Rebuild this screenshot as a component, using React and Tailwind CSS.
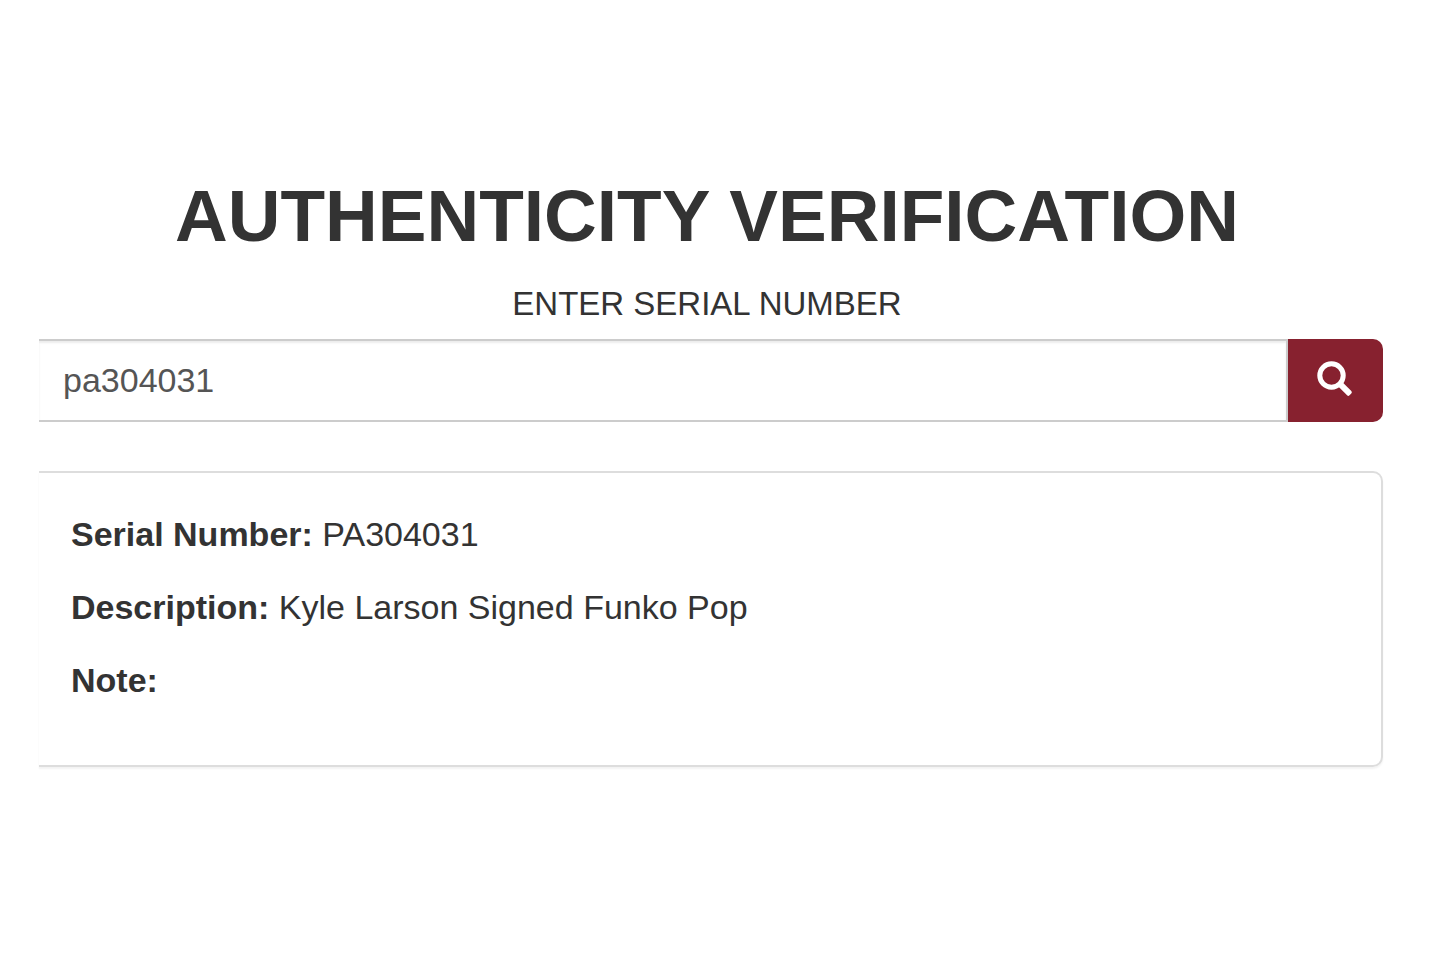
import React, { useState } from 'react';

const record = [
  { label: 'Serial Number', value: 'PA304031' },
  { label: 'Description', value: 'Kyle Larson Signed Funko Pop' },
  { label: 'Note', value: '' },
];

function SearchIcon() {
  return (
    <svg viewBox="0 0 36 36" className="mr-0.5 mb-1 size-9" fill="none" aria-hidden="true">
      <circle cx="14.5" cy="14.5" r="11.7" stroke="white" strokeWidth="5" />
      <path
        d="M24 19.800 L34.300 30.100 Q35.500 31.300 34.300 32.500 L32.500 34.300 Q31.300 35.500 30.100 34.300 L19.800 24 Z"
        fill="white"
      />
    </svg>
  );
}

export default function App() {
  const [serial, setSerial] = useState('pa304031');

  return (
    <main className="min-h-screen bg-white pt-44 pr-[62px] pl-[39px] font-['Liberation_Sans',Arial,sans-serif] text-[#333]">
      <h1 className="pr-2 text-center text-[73px] leading-20 font-bold">AUTHENTICITY VERIFICATION</h1>

      <form onSubmit={(e) => e.preventDefault()}>
        <label htmlFor="serial" className="mt-6 block pr-2 text-center text-[33px] leading-12">
          ENTER SERIAL NUMBER
        </label>
        <div className="mt-[11px] flex h-[83px]">
          <input
            id="serial"
            type="text"
            value={serial}
            onChange={(e) => setSerial(e.target.value)}
            className="min-w-0 flex-1 border-y-2 border-r-2 border-[#ccc] px-6 text-[34px] text-[#555] shadow-[inset_0_2px_2px_rgba(0,0,0,0.075)] outline-none"
          />
          <button
            type="submit"
            aria-label="Search"
            className="flex w-[95px] items-center justify-center rounded-r-[10px] bg-[#87212f]"
          >
            <SearchIcon />
          </button>
        </div>
      </form>

      <section className="mt-[49px] rounded-r-[10px] border-y-2 border-r-2 border-[#ddd] px-8 pt-9 pb-[60px] shadow-[0_2px_2px_rgba(0,0,0,0.05)]">
        {record.map((row) => (
          <p key={row.label} className="mb-[23px] text-[34px] leading-[50px] last:mb-0">
            <strong>{row.label}:</strong> {row.value}
          </p>
        ))}
      </section>
    </main>
  );
}
